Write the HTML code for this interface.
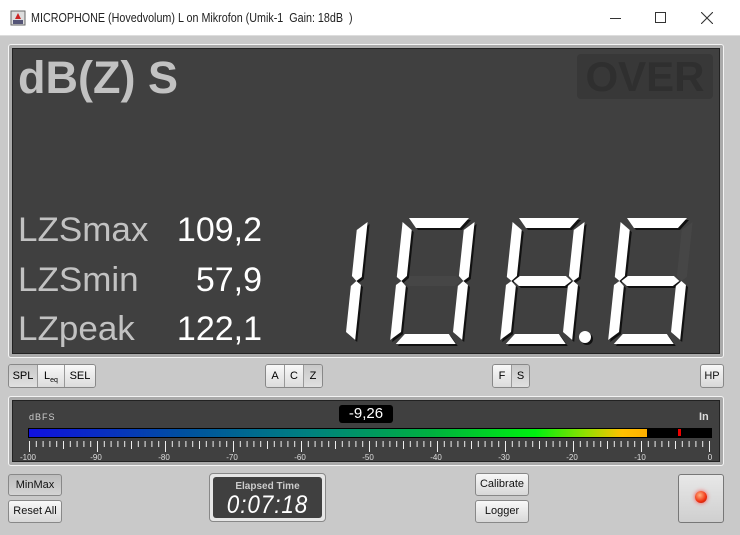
<!DOCTYPE html>
<html><head><style>
*{margin:0;padding:0;box-sizing:border-box}
body{width:740px;height:535px;background:#c9c9c9;font-family:"Liberation Sans",sans-serif;position:relative;overflow:hidden}
.abs{position:absolute}
.title{left:0;top:0;width:740px;height:36px;background:#fff;border-bottom:1px solid #ddd}
.title span{position:absolute;left:31px;top:11px;font-size:12.5px;color:#222;transform:scaleX(.86);transform-origin:left}
.panel{left:8px;top:44px;width:716px;height:314px;border:1px solid #f4f4f4;border-radius:3px;background:#aaa}
.dark{left:12px;top:48px;width:708px;height:306px;background:#404040;border:1px solid #222}
.lbl{color:#c2c2c2;font-size:34px;left:18px;transform:scaleX(1.03);transform-origin:left}
.val{color:#fff;font-size:34px;width:120px;text-align:right;left:142px}
.btn{background:linear-gradient(#f8f8f8,#d8d8d8);border:1px solid #888;border-radius:3px;font-size:11px;color:#111;text-align:center}
.grp{display:flex;border:1px solid #888;border-radius:3px;overflow:hidden}
.grp div{border-right:1px solid #999;background:linear-gradient(#f8f8f8,#dcdcdc);font-size:11px;text-align:center;line-height:22px}
.grp div.on{background:linear-gradient(#c8c8c8,#e0e0e0)}
.grp div:last-child{border-right:none}
</style></head><body>
<div class="abs title">
<svg class="abs" style="left:10px;top:10px" width="16" height="16"><rect x="1" y="1" width="14" height="14" fill="#ddd" stroke="#666"/><path d="M8 3 L11 9 H5Z" fill="#c22"/><rect x="3" y="10" width="10" height="4" fill="#557"/></svg>
<span>MICROPHONE (Hovedvolum) L on Mikrofon (Umik-1&nbsp; Gain: 18dB&nbsp; )</span>
<div class="abs" style="left:610px;top:18px;width:11px;height:1px;background:#333"></div>
<div class="abs" style="left:655px;top:12px;width:11px;height:11px;border:1px solid #333"></div>
<svg class="abs" style="left:701px;top:12px" width="12" height="12"><path d="M0 0L12 12M12 0L0 12" stroke="#333" stroke-width="1.1"/></svg>
</div>
<div class="abs panel"></div>
<div class="abs dark"></div>
<div class="abs" style="left:18px;top:52px;font-size:45px;font-weight:bold;color:#c2c2c2">dB(Z) S</div>
<div class="abs" style="left:577px;top:54px;width:136px;height:45px;background:#383838;border-radius:4px;color:#2f2f2f;font-size:42px;font-weight:bold;text-align:center;line-height:46px">OVER</div>
<div class="abs lbl" style="top:211px">LZSmax</div>
<div class="abs lbl" style="top:261px">LZSmin</div>
<div class="abs lbl" style="top:310px">LZpeak</div>
<div class="abs val" style="top:211px">109,2</div>
<div class="abs val" style="top:261px">57,9</div>
<div class="abs val" style="top:310px">122,1</div>
<svg class="abs" style="left:0;top:0" width="740" height="535">
<defs>
<polygon id="a" points="6,0 66,0 58,10 14,10"/>
<polygon id="b" points="72,4 72,59 67,63 62,58 62,12"/>
<polygon id="c" points="72,67 72,122 62,114 62,68 67,63"/>
<polygon id="d" points="6,126 66,126 58,116 14,116"/>
<polygon id="e" points="0,67 0,122 10,114 10,68 5,63"/>
<polygon id="f" points="0,4 0,59 5,63 10,58 10,12"/>
<polygon id="g" points="7,63 13,58 59,58 65,63 59,68 13,68"/>
<g id="d1"><use href="#b"/><use href="#c"/></g>
<g id="d0"><use href="#a"/><use href="#b"/><use href="#c"/><use href="#d"/><use href="#e"/><use href="#f"/></g>
<g id="d8"><use href="#d0"/><use href="#g"/></g>
<g id="d6"><use href="#a"/><use href="#c"/><use href="#d"/><use href="#e"/><use href="#f"/><use href="#g"/></g>
</defs>
<g fill="#464646">
<use href="#g" transform="translate(403,218) skewX(-6)"/>
<use href="#b" transform="translate(621,218) skewX(-6)"/>
</g>
<g fill="#111" transform="translate(2,2)">
<use href="#d1" transform="translate(296,218) skewX(-6)"/>
<use href="#d0" transform="translate(403,218) skewX(-6)"/>
<use href="#d8" transform="translate(513,218) skewX(-6)"/>
<use href="#d6" transform="translate(621,218) skewX(-6)"/>
<circle cx="585" cy="337" r="6"/>
</g>
<g fill="#fff">
<use href="#d1" transform="translate(296,218) skewX(-6)"/>
<use href="#d0" transform="translate(403,218) skewX(-6)"/>
<use href="#d8" transform="translate(513,218) skewX(-6)"/>
<use href="#d6" transform="translate(621,218) skewX(-6)"/>
<circle cx="585" cy="337" r="6"/>
</g>
</svg>
<div class="abs grp" style="left:8px;top:364px;height:24px;width:88px"><div class="on" style="width:29px">SPL</div><div style="width:27px">L<sub style="font-size:7px">eq</sub></div><div style="width:30px">SEL</div></div>
<div class="abs grp" style="left:265px;top:364px;height:24px;width:58px"><div style="width:19px">A</div><div style="width:19px">C</div><div class="on" style="width:18px">Z</div></div>
<div class="abs grp" style="left:492px;top:364px;height:24px;width:38px"><div style="width:19px">F</div><div class="on" style="width:17px">S</div></div>
<div class="abs btn" style="left:700px;top:364px;width:24px;height:24px;line-height:22px">HP</div>
<div class="abs panel" style="top:396px;height:70px"></div>
<div class="abs dark" style="top:400px;height:62px"></div>
<div class="abs" style="left:29px;top:412px;font-size:9px;color:#ccc;letter-spacing:1px">dBFS</div>
<div class="abs" style="left:699px;top:411px;font-size:11px;font-weight:bold;color:#ddd">In</div>
<div class="abs" style="left:339px;top:405px;width:54px;height:18px;background:#000;border-radius:3px;color:#fff;font-size:15px;text-align:center;line-height:18px">-9,26</div>
<div class="abs" style="left:28px;top:428px;width:684px;height:10px;background:#000;border:1px solid #000"></div>
<div class="abs" style="left:29px;top:429px;width:618px;height:8px;background:linear-gradient(90deg,#1010e0 0%,#0050a0 25%,#008080 45%,#00b040 65%,#00f010 82%,#90e000 90%,#ffc000 96%,#ffb000 100%)"></div>
<div class="abs" style="left:678px;top:429px;width:3px;height:7px;background:#e00"></div>
<svg class="abs" style="left:0;top:440px" width="740" height="25">
<path stroke="#eee" d="M29.5 1v11M97.5 1v11M165.5 1v11M233.5 1v11M301.5 1v11M369.5 1v11M437.5 1v11M505.5 1v11M573.5 1v11M641.5 1v11M709.5 1v11
M36.3 1v6M43.1 1v6M49.9 1v6M56.7 1v6M63.5 1v8M70.3 1v6M77.1 1v6M83.9 1v6M90.7 1v6
M104.3 1v6M111.1 1v6M117.9 1v6M124.7 1v6M131.5 1v8M138.3 1v6M145.1 1v6M151.9 1v6M158.7 1v6
M172.3 1v6M179.1 1v6M185.9 1v6M192.7 1v6M199.5 1v8M206.3 1v6M213.1 1v6M219.9 1v6M226.7 1v6
M240.3 1v6M247.1 1v6M253.9 1v6M260.7 1v6M267.5 1v8M274.3 1v6M281.1 1v6M287.9 1v6M294.7 1v6
M308.3 1v6M315.1 1v6M321.9 1v6M328.7 1v6M335.5 1v8M342.3 1v6M349.1 1v6M355.9 1v6M362.7 1v6
M376.3 1v6M383.1 1v6M389.9 1v6M396.7 1v6M403.5 1v8M410.3 1v6M417.1 1v6M423.9 1v6M430.7 1v6
M444.3 1v6M451.1 1v6M457.9 1v6M464.7 1v6M471.5 1v8M478.3 1v6M485.1 1v6M491.9 1v6M498.7 1v6
M512.3 1v6M519.1 1v6M525.9 1v6M532.7 1v6M539.5 1v8M546.3 1v6M553.1 1v6M559.9 1v6M566.7 1v6
M580.3 1v6M587.1 1v6M593.9 1v6M600.7 1v6M607.5 1v8M614.3 1v6M621.1 1v6M627.9 1v6M634.7 1v6
M648.3 1v6M655.1 1v6M661.9 1v6M668.7 1v6M675.5 1v8M682.3 1v6M689.1 1v6M695.9 1v6M702.7 1v6"/>
<g fill="#ddd" font-size="8" font-family="Liberation Sans" text-anchor="middle">
<text x="28" y="20">-100</text><text x="96" y="20">-90</text><text x="164" y="20">-80</text><text x="232" y="20">-70</text><text x="300" y="20">-60</text><text x="368" y="20">-50</text><text x="436" y="20">-40</text><text x="504" y="20">-30</text><text x="572" y="20">-20</text><text x="640" y="20">-10</text><text x="710" y="20">0</text>
</g>
</svg>
<div class="abs btn" style="left:8px;top:474px;width:54px;height:22px;line-height:20px;background:linear-gradient(#bdbdbd,#d4d4d4)">MinMax</div>
<div class="abs btn" style="left:8px;top:500px;width:54px;height:23px;line-height:21px">Reset All</div>
<div class="abs" style="left:209px;top:473px;width:117px;height:49px;border:1px solid #888;border-radius:4px;background:#e6e6e6"></div>
<div class="abs" style="left:213px;top:477px;width:109px;height:41px;background:#404040;border-radius:3px"></div>
<div class="abs" style="left:213px;top:481px;width:109px;text-align:center;font-size:10px;font-weight:bold;color:#ccc">Elapsed Time</div>
<div class="abs" style="left:213px;top:491px;width:109px;text-align:center;font-size:25px;color:#fff;font-style:italic;letter-spacing:1px;transform:scaleX(.9)">0:07:18</div>
<div class="abs btn" style="left:475px;top:473px;width:54px;height:23px;line-height:21px">Calibrate</div>
<div class="abs btn" style="left:475px;top:500px;width:54px;height:23px;line-height:21px">Logger</div>
<div class="abs" style="left:678px;top:474px;width:46px;height:49px;border:1px solid #777;border-radius:3px;background:linear-gradient(#e8e8e8,#cfcfcf)"></div>
<div class="abs" style="left:695px;top:491px;width:12px;height:12px;border-radius:50%;background:radial-gradient(circle at 40% 35%,#ffb080,#f03010 60%,#a01000);box-shadow:0 0 4px #f44"></div>
</body></html>
